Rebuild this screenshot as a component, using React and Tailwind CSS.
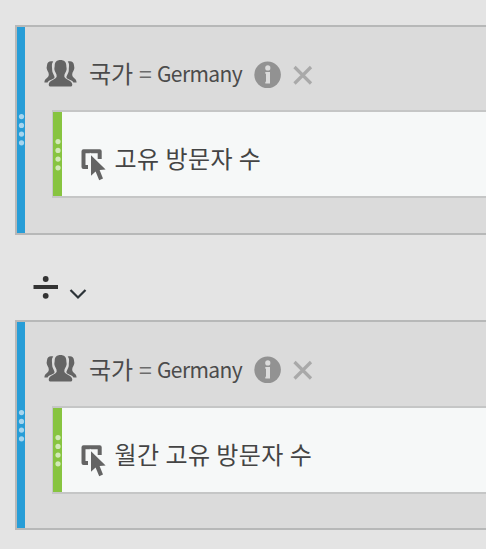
const koreanFont = "font-['Noto_Sans_CJK_KR',sans-serif]";

function VisitorsIcon() {
  return (
    <svg width="34" height="30" viewBox="0 0 34 30" className="shrink-0" fill="#646464">
      <path d="M9.3 2.6C6.2 1.7 3.2 2.4 3 6.2C2.9 7.6 2.5 8.1 2.7 9.6C3 12 4.8 12.9 4.8 15.5C4.8 19.5 0.5 19 0.4 23.4H3.6C4.8 20.8 9.8 20.5 10.5 18.6C11 17 8.3 14.5 8.2 11.2C8.1 7.3 7.2 5 9.3 2.6Z" />
      <path d="M23.7 2.6C26.8 1.7 29.8 2.4 30 6.2C30.1 7.6 30.5 8.1 30.3 9.6C30 12 28.2 12.9 28.2 15.5C28.2 19.5 32.5 19 32.6 23.4H29.4C28.2 20.8 23.2 20.5 22.5 18.6C22 17 24.7 14.5 24.8 11.2C24.9 7.3 25.8 5 23.7 2.6Z" />
      <path d="M16.5 1C12.7 1 10.7 3.1 10.7 6.5C10.7 8 10.2 9 10.4 10.5C10.7 13 12.7 14.3 12.7 17.2C12.7 20.5 4.9 20.8 4.7 25.6Q4.7 27.6 6 27.6H27Q28.3 27.6 28.3 25.6C28.1 20.8 20.3 20.5 20.3 17.2C20.3 14.3 22.3 13 22.6 10.5C22.8 9 22.3 8 22.3 6.5C22.3 3.1 20.3 1 16.5 1Z" />
    </svg>
  );
}

function EventIcon() {
  return (
    <svg width="26" height="34" viewBox="0 0 26 34" className="shrink-0">
      <path d="M7 18H2.5V2.2H18.7V10" fill="none" stroke="#646464" strokeWidth="4" strokeLinejoin="round" />
      <path d="M10 6.2L24.6 20.4L18.6 21L22 29.6L18.2 31.2L14.6 22.6L10 26.8Z" fill="#646464" stroke="#f6f8f8" strokeWidth="2.2" paintOrder="stroke" />
    </svg>
  );
}

function Dots({ className, cx = 3 }) {
  return (
    <svg width="6" height="34" viewBox="0 0 6 34" className={`shrink-0 overflow-visible ${className}`}>
      {[3.6, 12.4, 21.1, 29.8].map((y) => (
        <circle key={y} cx={cx} cy={y} r="2.6" fill="currentColor" />
      ))}
    </svg>
  );
}

function Segment({ metric, headerHeight, titleOffset, handleOffset }) {
  return (
    <section className="flex h-[210px] w-full shrink-0 border-y-2 border-l-2 border-[#b7b8b8] bg-[#dbdbdb]">
      <div className={`flex w-2 shrink-0 items-start justify-center bg-[#279dd7] ${handleOffset}`}>
        <Dots cx={3.5} className="text-[#a5d5ee]" />
      </div>
      <div className="min-w-0 flex-1 pl-[19px]">
        <div className={`flex items-start pt-8 text-[#4b4b4b] ${headerHeight}`}>
          <VisitorsIcon />
          <span className={`ml-[11px] w-[50px] shrink-0 whitespace-nowrap text-[24px] leading-[28px] ${titleOffset} ${koreanFont}`}>국가</span>
          <span className={`w-[18px] shrink-0 text-[23px] leading-[28px] text-[#6b6b6b] ${titleOffset} ${koreanFont}`}>=</span>
          <span className={`w-[97px] shrink-0 text-[21px] leading-[28px] tracking-[-0.6px] ${titleOffset} ${koreanFont}`}>Germany</span>
          <svg width="28" height="28" viewBox="0 0 28 28" className="mt-[2px] shrink-0">
            <circle cx="13.6" cy="13.8" r="13.3" fill="#929292" />
            <circle cx="13.8" cy="6.9" r="2.6" fill="#dbdbdb" />
            <path d="M11.3 11.1H16V22.4H11.3V20.8H12V12.7H11.3Z" fill="#dbdbdb" />
          </svg>
          <svg width="20" height="20" viewBox="0 0 20 20" className="ml-[11px] mt-[6px] shrink-0">
            <path d="M1.5 2L18 18.5M18 2L1.5 18.5" stroke="#a9a9a9" strokeWidth="3.2" />
          </svg>
        </div>
        <div className="ml-2 flex h-[88px] border-y-2 border-l border-[#c5c6c6] bg-[#f6f8f8]">
          <div className="flex w-[9px] shrink-0 items-start justify-center bg-[#87c440] pt-[26px]">
            <Dots className="text-[#d2e9b8]" />
          </div>
          <div className="flex items-start pl-[19px] pt-[37px]">
            <EventIcon />
            <span className={`-mt-[7px] ml-[7.5px] whitespace-nowrap text-[24px] leading-[32px] tracking-[0.45px] text-[#444] ${koreanFont}`}>{metric}</span>
          </div>
        </div>
      </div>
    </section>
  );
}

export default function App() {
  return (
    <main className="flex h-[549px] w-[486px] flex-col overflow-hidden bg-[#e4e4e4] pl-[15px] pt-[25px]">
      <Segment
        metric="고유 방문자 수"
        headerHeight="h-[83px]"
        titleOffset="mt-0"
        handleOffset="pt-[86px]"
      />
      <div className="flex h-[85px] shrink-0 items-start pl-[18px] pt-10">
        <svg width="26" height="26" viewBox="0 0 26 26" fill="#333">
          <circle cx="12.7" cy="4" r="2.9" />
          <path d="M.5 10H25V14H.5Z" />
          <circle cx="12.7" cy="20.8" r="2.9" />
        </svg>
        <svg width="18" height="12" viewBox="0 0 18 12" className="ml-[10px] mt-[13px]">
          <path d="M1.5 2L9 9.5L16.5 2" fill="none" stroke="#2c3338" strokeWidth="2.2" />
        </svg>
      </div>
      <Segment
        metric="월간 고유 방문자 수"
        headerHeight="h-[84px]"
        titleOffset="mt-px"
        handleOffset="pt-[87px]"
      />
    </main>
  );
}
